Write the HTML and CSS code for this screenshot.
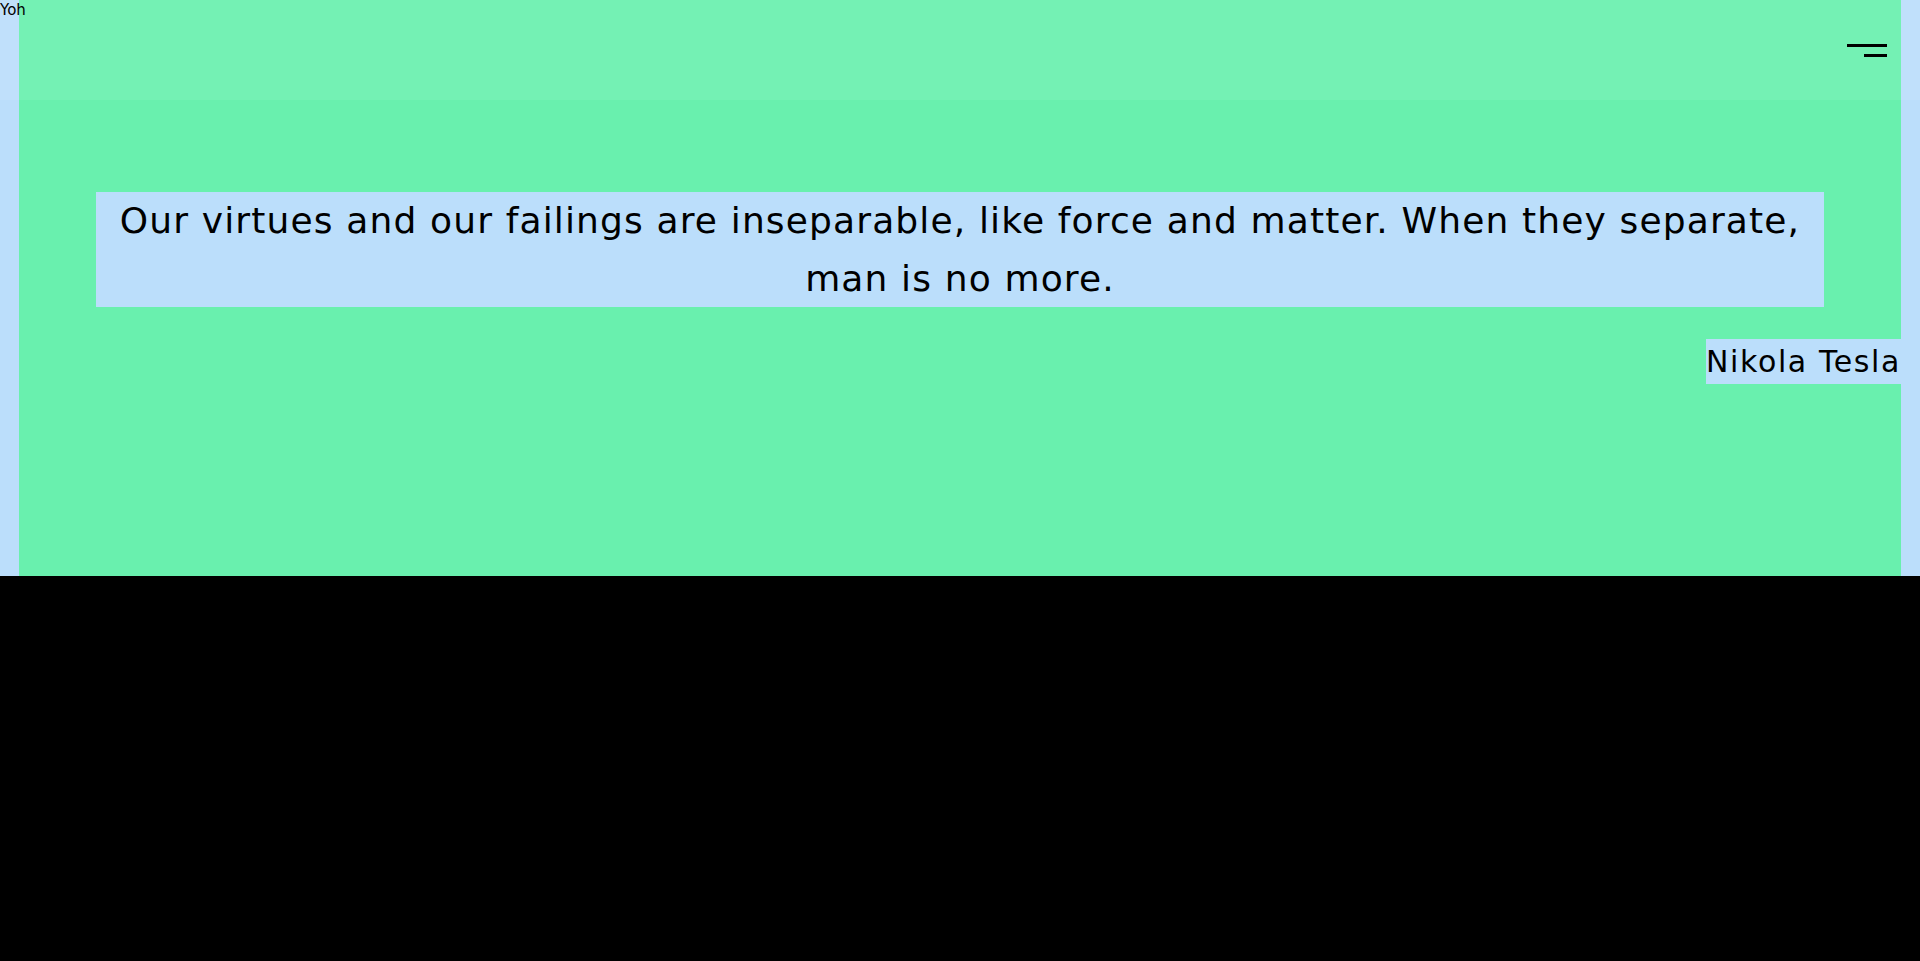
FILE: index.html
```html
<!DOCTYPE html>
<html lang="en">
<head>
<meta charset="utf-8">
<title>Quote</title>
<link rel="stylesheet" href="styles.css">
</head>
<body>
<div class="page">
  <span class="tag">Yoh</span>
  <header class="topbar">
    <button class="menu" aria-label="Menu">
      <span class="bar bar-long"></span>
      <span class="bar bar-short"></span>
    </button>
  </header>
  <main class="section">
    <blockquote class="quote">Our virtues and our failings are inseparable, like force and matter. When they separate, man is no more.</blockquote>
    <cite class="author">Nikola Tesla</cite>
  </main>
</div>
</body>
</html>
```
FILE: styles.css
```css
html {
  background: #000;
}
body {
  margin: 0;
  background: #000;
  font-family: "DejaVu Sans", sans-serif;
  color: #000;
}
.page {
  position: relative;
  height: 575.5px;
  background: #bbdefb;
  padding: 0 19px;
  box-sizing: border-box;
}
.tag {
  position: absolute;
  top: 1px;
  left: 0;
  font-family: "DejaVu Sans", sans-serif;
  font-size: 15px;
  line-height: normal;
  z-index: 3;
}
.topbar {
  position: absolute;
  top: 0;
  left: 0;
  right: 0;
  height: 100px;
  background: rgba(255, 255, 255, 0.08);
  display: flex;
  justify-content: flex-end;
  align-items: flex-start;
  padding-right: 33px;
  box-sizing: border-box;
  z-index: 2;
}
.menu {
  margin-top: 44px;
  padding: 0;
  border: 0;
  background: none;
  display: flex;
  flex-direction: column;
  align-items: flex-end;
  gap: 7px;
  cursor: pointer;
}
.bar {
  display: block;
  height: 3px;
  background: #000;
}
.bar-long { width: 40px; }
.bar-short { width: 23px; }
.section {
  height: 100%;
  background: #69f0ae;
  display: flex;
  flex-direction: column;
  align-items: center;
  padding-top: 192px;
  box-sizing: border-box;
}
.quote {
  margin: 0;
  width: 90vw;
  background: #bbdefb;
  font-size: 36px;
  line-height: 57.6px;
  letter-spacing: 1.14px;
  text-align: center;
}
.author {
  align-self: flex-end;
  margin-top: 32px;
  background: #bbdefb;
  font-style: normal;
  font-size: 30px;
  line-height: 45px;
  letter-spacing: 1.6px;
}
```
